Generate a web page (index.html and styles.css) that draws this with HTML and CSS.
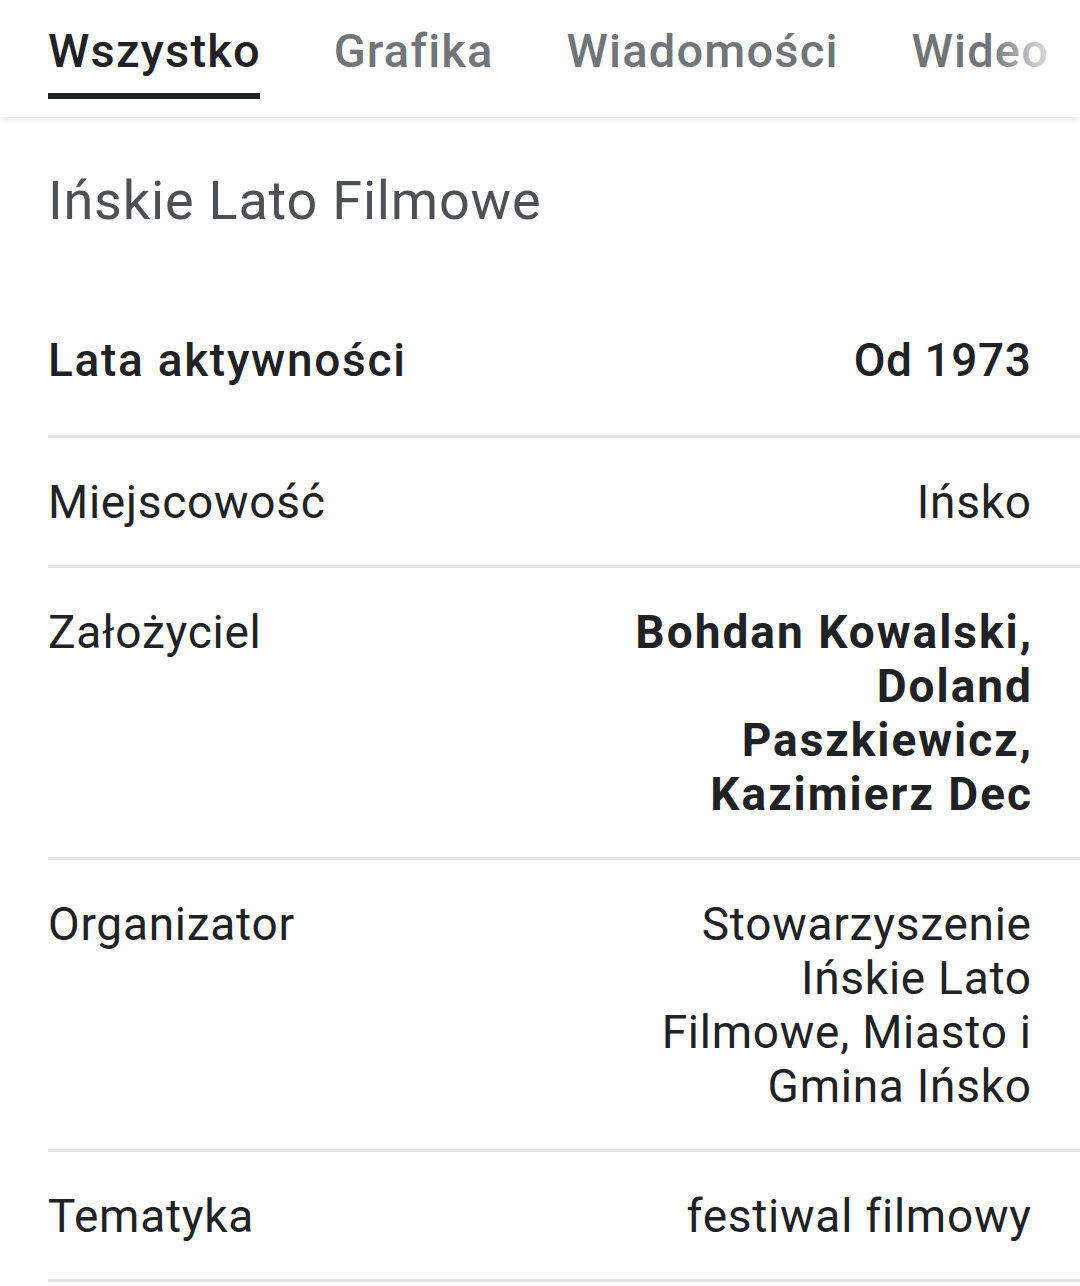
FILE: index.html
```html
<!DOCTYPE html>
<html lang="pl">
<head>
<meta charset="utf-8">
<title>Ińskie Lato Filmowe</title>
<link rel="stylesheet" href="styles.css">
</head>
<body>
<header class="tabs">
  <nav class="tab-list">
    <a class="tab active"><span class="tab-text">Wszystko</span></a>
    <a class="tab"><span class="tab-text">Grafika</span></a>
    <a class="tab"><span class="tab-text">Wiadomości</span></a>
    <a class="tab"><span class="tab-text">Wideo</span></a>
  </nav>
</header>
<main class="panel">
  <h1 class="title">Ińskie Lato Filmowe</h1>
  <div class="facts">
    <div class="row first">
      <div class="label strong">Lata aktywności</div>
      <div class="value strong">Od 1973</div>
    </div>
    <div class="row">
      <div class="label">Miejscowość</div>
      <div class="value">Ińsko</div>
    </div>
    <div class="row">
      <div class="label">Założyciel</div>
      <div class="value bold">Bohdan Kowalski,<br>Doland<br>Paszkiewicz,<br>Kazimierz Dec</div>
    </div>
    <div class="row">
      <div class="label">Organizator</div>
      <div class="value">Stowarzyszenie<br>Ińskie Lato<br>Filmowe, Miasto i<br>Gmina Ińsko</div>
    </div>
    <div class="row">
      <div class="label">Tematyka</div>
      <div class="value">festiwal filmowy</div>
    </div>
  </div>
</main>
</body>
</html>
```

FILE: styles.css
```css
html, body {
  margin: 0;
  padding: 0;
  background: #ffffff;
}

body {
  font-family: Roboto, "Noto Sans", Arial, sans-serif;
  color: #202124;
  width: 1080px;
  overflow: hidden;
}

.tabs {
  position: relative;
  height: 117px;
  background: #fff;
  box-shadow: 0 2px 6px rgba(32, 33, 36, 0.12);
  z-index: 1;
  overflow: hidden;
}

.tabs::after {
  content: "";
  position: absolute;
  top: 0;
  right: 0;
  width: 90px;
  height: 100%;
  background: linear-gradient(to right, rgba(255,255,255,0), rgba(255,255,255,0.6) 50%, rgba(255,255,255,1));
}

.tab-list {
  display: flex;
  gap: 74px;
  padding-left: 48px;
  white-space: nowrap;
}

.tab {
  display: block;
  font-size: 47px;
  font-weight: 500;
  color: #70757a;
  line-height: 56px;
  padding-top: 23px;
  height: 99px;
  box-sizing: border-box;
  border-bottom: 6px solid transparent;
}

.tab-text {
  letter-spacing: 1.2px;
  margin-right: -1.2px;
}

.tab.active {
  color: #202124;
  border-bottom-color: #202124;
}

.panel {
  padding-top: 52px;
}

.title {
  margin: 0;
  padding-left: 48px;
  font-size: 54px;
  font-weight: 400;
  letter-spacing: 0.8px;
  line-height: 64px;
  color: #4d5156;
}

.facts {
  margin-left: 48px;
  margin-top: 100px;
}

.row {
  display: flex;
  justify-content: space-between;
  align-items: flex-start;
  padding: 37px 49px 36px 0;
  border-top: 3px solid #e3e3e3;
  font-size: 46px;
  line-height: 54px;
  letter-spacing: 0.75px;
}

.row.first {
  border-top: none;
  padding-top: 0;
  padding-bottom: 48px;
}

.row:last-child {
  border-bottom: 3px solid #e3e3e3;
}

.label {
  color: #202124;
}

.value {
  text-align: right;
  color: #202124;
  margin-right: -0.75px;
}

.strong {
  font-weight: 500;
  letter-spacing: 1.7px;
}

.value.strong {
  letter-spacing: 0.6px;
  margin-right: -0.6px;
}

.bold {
  font-weight: 700;
  letter-spacing: 2px;
}

.value.bold {
  margin-right: -2px;
}
```
